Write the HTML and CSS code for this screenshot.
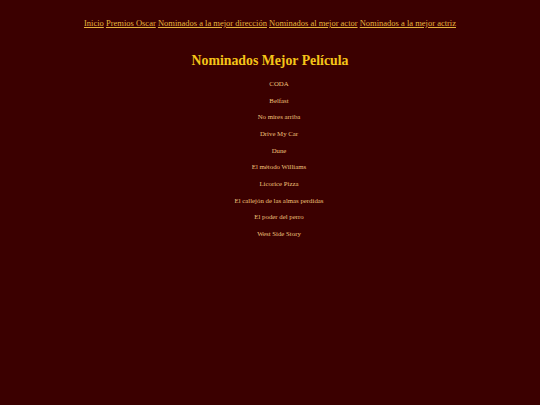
FILE: index.html
```html
<!DOCTYPE html>
<html lang="es">
<head>
<meta charset="utf-8">
<title>Nominados Mejor Película</title>
<link rel="stylesheet" href="styles.css">
</head>
<body>
<nav class="menu">
  <a href="#">Inicio</a>
  <a href="#">Premios Oscar</a>
  <a href="#">Nominados a la mejor dirección</a>
  <a href="#">Nominados al mejor actor</a>
  <a href="#">Nominados a la mejor actriz</a>
</nav>
<main class="content">
  <h1 class="title">Nominados Mejor Película</h1>
  <ul class="films">
    <li>CODA</li>
    <li>Belfast</li>
    <li>No mires arriba</li>
    <li>Drive My Car</li>
    <li>Dune</li>
    <li>El método Williams</li>
    <li>Licorice Pizza</li>
    <li>El callejón de las almas perdidas</li>
    <li>El poder del perro</li>
    <li>West Side Story</li>
  </ul>
</main>
</body>
</html>
```
FILE: styles.css
```css
html, body {
  margin: 0;
  padding: 0;
  background: #3b0000;
  height: 100%;
}
body {
  font-family: "Liberation Serif", "Times New Roman", serif;
  text-align: center;
}
.menu {
  padding-top: 17px;
  font-size: 8.5px;
  line-height: 12px;
}
.menu a {
  color: #e6b43c;
  text-decoration: underline;
}
.content {
  padding-top: 22px;
}
.title {
  margin: 0;
  color: #f5c518;
  font-size: 13.8px;
  line-height: 20px;
  font-weight: bold;
}
.films {
  list-style: none;
  margin: 0;
  padding: 5px 0 0 18px;
}
.films li {
  color: #f0c27a;
  font-size: 6.8px;
  line-height: 16.67px;
}
```
